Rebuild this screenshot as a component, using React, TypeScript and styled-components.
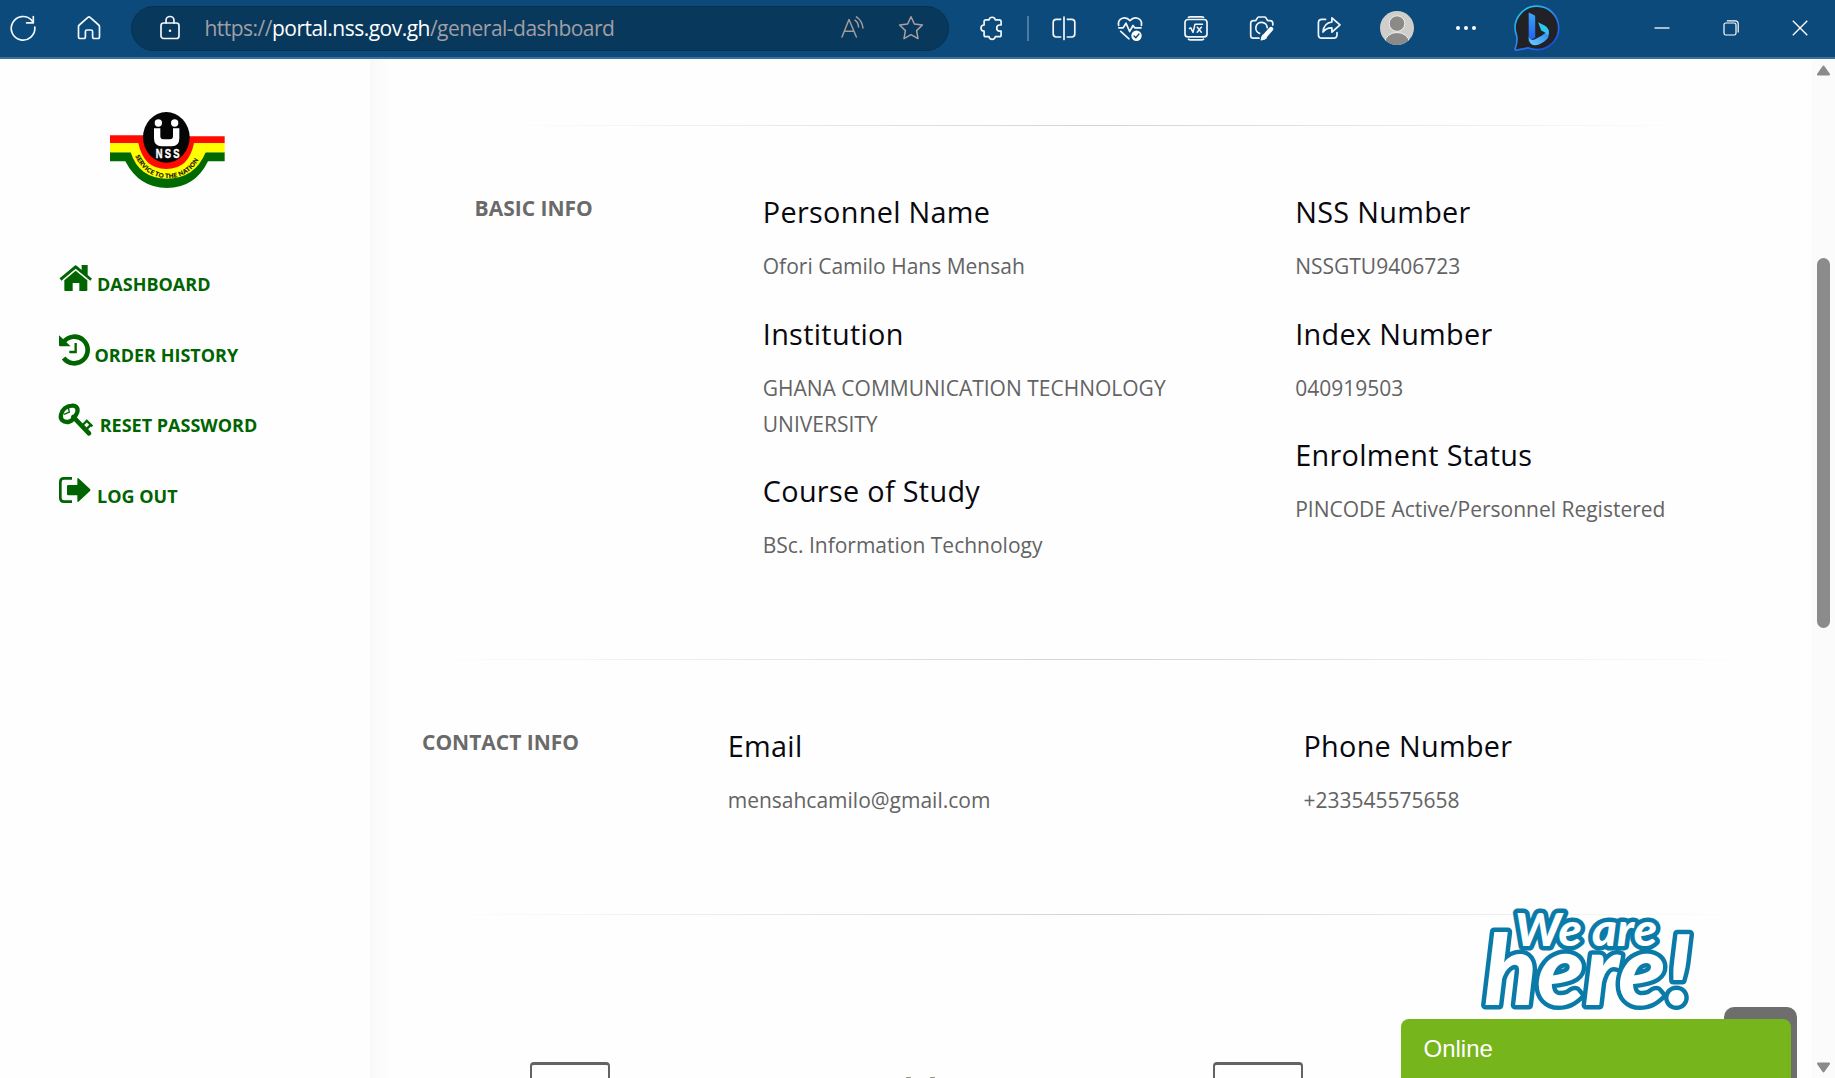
import React from "react";
import styled, { createGlobalStyle } from "styled-components";

const GlobalStyle = createGlobalStyle`
  * { box-sizing: border-box; }
  html, body { margin: 0; padding: 0; background: #fefefe; }
  body { font-family: "Open Sans", "Noto Sans", sans-serif; overflow: hidden; }
`;

const Window = styled.div`
  display: flex;
  flex-direction: column;
  width: 1835px;
  height: 1078px;
  overflow: hidden;
  position: relative;
`;

/* Browser bar */
const Toolbar = styled.header`
  display: flex;
  align-items: center;
  flex: none;
  height: 59px;
  background: #0b4a7a;
  border-bottom: 2px solid #3b719f;
`;

const Slot = styled.div<{ $gap: number; $w?: number; $h?: number }>`
  flex: none;
  display: flex;
  margin-left: ${(p) => p.$gap}px;
  margin-bottom: 1px;
  width: ${(p) => p.$w ?? 30}px;
  height: ${(p) => p.$h ?? 30}px;
  svg { display: block; width: 100%; height: 100%; overflow: visible; }
`;

const AddressBar = styled.div`
  flex: none;
  display: flex;
  align-items: center;
  margin-left: 27px;
  width: 818px;
  height: 45px;
  border-radius: 23px;
  background: #09385d;
  border: 1px solid #083252;
`;

const Url = styled.div`
  margin-left: 19.5px;
  margin-bottom: 2px;
  width: 612.5px;
  font-family: "Open Sans", "Noto Sans", sans-serif;
  font-size: 21px;
  line-height: 30px;
  letter-spacing: -0.52px;
  color: #a09fa3;
  white-space: nowrap;
`;

const Host = styled.span`
  color: #fff;
`;

const Separator = styled.div`
  flex: none;
  width: 2px;
  height: 25px;
  margin-left: 20px;
  background: #4a7ba3;
`;

const strokeProps = {
  fill: "none",
  stroke: "#f2f6fa",
  strokeWidth: 1.7,
  strokeLinecap: "round" as const,
  strokeLinejoin: "round" as const,
};

const ReloadIcon = () => (
  <svg viewBox="0 0 30 30" {...strokeProps}>
    <path d="M26.8 14.2A11.8 11.8 0 1 1 23.6 7.2L25.3 9.4" />
    <path d="M25.3 3.6V9.8H18.6" />
  </svg>
);
const HomeIcon = () => (
  <svg viewBox="0 0 30 30" {...strokeProps}>
    <path d="M13.9 4.4 5.3 12q-.8.7-.8 1.8V23.8q0 1.7 1.7 1.7H9.8q1.6 0 1.6-1.7V18.6q0-1.6 1.6-1.6H17q1.6 0 1.6 1.6V23.8q0 1.7 1.6 1.7H23.8q1.7 0 1.7-1.7V13.8q0-1.1-.8-1.8L16.1 4.4q-1.1-.9-2.2 0Z" />
  </svg>
);
const LockIcon = () => (
  <svg viewBox="0 0 30 30" {...strokeProps}>
    <rect x="6" y="10" width="18" height="15.5" rx="2.6" />
    <path d="M11 10V7.5a4 4 0 0 1 8 0V10" />
    <circle cx="15" cy="17.7" r="1.3" fill="#f2f6fa" stroke="none" />
  </svg>
);
const ReadAloudIcon = () => (
  <svg viewBox="0 0 30 30" {...strokeProps} stroke="#a39c9a" strokeWidth={1.5}>
    <path d="M4 24 11 6.5 18.4 24M6.4 18.3H16" />
    <path d="M17 7.2Q20.3 9.5 20.5 14M18.4 3.8Q24.2 7.6 25 15" />
  </svg>
);
const StarIcon = () => (
  <svg viewBox="0 0 30 30" {...strokeProps} stroke="#a8a19f" strokeWidth={1.5}>
    <path d="M15 3.8 18.4 11 26.4 12 20.6 17.6 22 25.6 15 21.7 8 25.6 9.4 17.6 3.6 12 11.6 11Z" />
  </svg>
);
const PuzzleIcon = () => (
  <svg viewBox="0 0 30 30" {...strokeProps}>
    <path d="M8.9 6.9H12A3.2 3.2 0 0 1 18.3 6.9H22.3Q24.1 6.9 24.1 8.7V12H22.8A3.1 3.1 0 0 0 22.8 18.2H24.1V21.9Q24.1 23.7 22.3 23.7H18.3A3.2 3.2 0 0 1 12 23.7H8.9Q7.1 23.7 7.1 21.9V18.2A3.1 3.1 0 0 1 7.1 12V8.7Q7.1 6.9 8.9 6.9Z" />
  </svg>
);
const SplitIcon = () => (
  <svg viewBox="0 0 30 30" {...strokeProps}>
    <path d="M11.6 6.3H7.3Q4.2 6.3 4.2 9.3V20.8Q4.2 24 7.3 24H11.6M18.4 6.3H22.7Q25.8 6.3 25.8 9.3V20.8Q25.8 24 22.7 24H18.4M15 4V26.5" />
  </svg>
);
const HeartIcon = () => (
  <svg viewBox="0 0 30 30" {...strokeProps}>
    <path d="M3.6 12.4C2.3 4.6 11 2.7 15 7.7 19 2.7 27.7 4.6 26.4 12.4" />
    <path d="M3.8 14.8H8.2L11 10.2 14.6 18.5 18 12.5 19.7 14.8H26" />
    <path d="M5.7 18.3 14 25.8" />
    <circle cx="21.5" cy="22.7" r="5.2" fill="#fff" stroke="none" />
    <path d="M19 23 20.8 24.7 24 21" stroke="#0b4a7a" strokeWidth={1.4} />
  </svg>
);
const MathIcon = () => (
  <svg viewBox="0 0 30 30" {...strokeProps}>
    <rect x="4" y="6.5" width="22" height="17.4" rx="3" />
    <path d="M7.5 4.3Q8.4 3.8 9.3 3.8H20.7Q21.6 3.8 22.5 4.3M7.5 26.2Q8.4 26.8 9.3 26.8H20.7Q21.6 26.8 22.5 26.2" />
    <path d="M8.4 15.5 9.8 14.8 12 19.3 14 11.2H21.5M16.3 14.2 20.3 19.2M20.3 14.2 16.2 19.2" strokeWidth={1.5} />
  </svg>
);
const CameraIcon = () => (
  <svg viewBox="0 0 30 30" {...strokeProps}>
    <path d="M12 25.2H6.4Q3.7 25.2 3.7 22.5V10.3Q3.7 7.6 6.4 7.6H8.8L10.6 4.6Q11 4 11.8 4H17.6Q18.3 4 18.8 4.6L20.6 7.6H23Q25.8 7.6 25.8 10.3V12" />
    <path d="M12.6 20.4A5.7 5.7 0 1 1 20.2 14.6" />
    <path d="M16.6 24.5 24 16" stroke="#fff" strokeWidth={4.4} />
    <path d="M14.4 26.7 16 22.4 19 25Z" fill="#fff" />
  </svg>
);
const ShareIcon = () => (
  <svg viewBox="0 0 30 30" {...strokeProps}>
    <path d="M11.5 6.4H8Q4.4 6.4 4.4 10V21.5Q4.4 25.2 8 25.2H19.4Q23 25.2 23 21.5V19.6" />
    <path d="M17.9 4.8 26 11.9 17.9 19.1V14.9Q12.2 14.6 9 19.1 9.6 9.9 17.9 9Z" />
  </svg>
);
const AvatarIcon = () => (
  <svg viewBox="0 0 34 34">
    <defs>
      <clipPath id="avatarClip"><circle cx="17" cy="17" r="17" /></clipPath>
    </defs>
    <circle cx="17" cy="17" r="17" fill="#d0cecb" />
    <g clipPath="url(#avatarClip)" fill="#8c8a88" stroke="#f0efee" strokeWidth="1">
      <circle cx="17" cy="12.6" r="7.8" />
      <ellipse cx="17" cy="31.5" rx="12.2" ry="10" />
    </g>
  </svg>
);
const MoreIcon = () => (
  <svg viewBox="0 0 30 30" fill="#fff">
    <circle cx="7" cy="15" r="2" /><circle cx="15" cy="15" r="2" /><circle cx="23" cy="15" r="2" />
  </svg>
);
const BingIcon = () => (
  <svg viewBox="0 0 50 50">
    <defs>
      <linearGradient id="ring" x1="0" y1="0" x2="0.7" y2="1">
        <stop offset="0" stopColor="#1fd3f3" />
        <stop offset="0.5" stopColor="#2f8bee" />
        <stop offset="1" stopColor="#1650e8" />
      </linearGradient>
      <linearGradient id="stem" x1="0" y1="0" x2="0" y2="1">
        <stop offset="0" stopColor="#3ea4f5" />
        <stop offset="1" stopColor="#1c5ff0" />
      </linearGradient>
      <linearGradient id="bowl" x1="1" y1="0" x2="0" y2="1">
        <stop offset="0" stopColor="#2b7df2" />
        <stop offset="1" stopColor="#6bd3fb" />
      </linearGradient>
    </defs>
    <path d="M25 3.2A21.6 21.6 0 1 1 25 46.6Q20 46.6 16 44.9L4.5 47.2Q2.6 47.4 3.2 45.6C5.2 40.4 5.4 36.6 4.6 32.6A21.6 21.6 0 0 1 25 3.2Z" fill="#222226" stroke="url(#ring)" strokeWidth="1.7" />
    <path d="M16.7 9.6 22 12Q23.2 12.7 23.2 14V34.5L16.7 38.4Z" fill="url(#stem)" />
    <path d="M16.7 33.5Q17.8 38 22.5 36.6L30 32.6Q35 29.3 36.6 26.2 38.6 34.6 32 38.8L27 41.6Q22 43.4 18.8 40.8 16.7 39 16.7 35Z" fill="url(#bowl)" />
    <path d="M26 19.2 32.6 22.6Q37.5 25.4 36.6 30.5 35.6 33.2 34.8 31.4 33.8 29.6 31.2 28.5L29.4 27.7Z" fill="#2cc8ee" />
  </svg>
);
const MinimizeIcon = () => (
  <svg viewBox="0 0 30 30" stroke="#fff" strokeWidth="1.3"><path d="M7.5 15H22.5" /></svg>
);
const RestoreIcon = () => (
  <svg viewBox="0 0 30 30" fill="none" stroke="#fff" strokeWidth="1.2">
    <rect x="8" y="10" width="12" height="12" rx="1.8" />
    <path d="M10.8 7.8H19.2Q22.2 7.8 22.2 10.8V19.4" />
  </svg>
);
const CloseIcon = () => (
  <svg viewBox="0 0 30 30" stroke="#fff" strokeWidth="1.3"><path d="M7.8 7.8 22.3 22.3M22.3 7.8 7.8 22.3" /></svg>
);

/* Page */
const Page = styled.div`
  display: flex;
  flex: 1;
  min-height: 0;
`;

const Sidebar = styled.aside`
  flex: none;
  width: 370px;
  background: #fefefe;
  padding: 36px 0 0 58px;
`;

const LogoBox = styled.div`
  width: 160px;
  height: 110px;
  margin-left: 31px;
  svg { display: block; }
`;

const Nav = styled.nav`
  display: flex;
  flex-direction: column;
  gap: 34.7px;
  margin-top: 55px;
`;

const NavItem = styled.a<{ $gap: number }>`
  display: flex;
  height: 36px;
  gap: ${(p) => p.$gap}px;
  color: #006400;
  text-decoration: none;
  svg { display: block; flex: none; overflow: visible; }
`;

const NavText = styled.span`
  font-weight: 700;
  font-size: 18px;
  line-height: 26px;
  margin-top: 11px;
  white-space: nowrap;
`;

const Main = styled.main`
  flex: 1;
  min-width: 0;
  background: linear-gradient(to right, #f8f8f8 0, #fefefe 20px);
  padding-top: 66px;
`;

const Divider = styled.hr<{ $left: number; $width: number }>`
  border: 0;
  height: 1px;
  margin: 0 0 0 ${(p) => p.$left}px;
  width: ${(p) => p.$width}px;
  background: linear-gradient(to right, rgba(0, 0, 0, 0), rgba(0, 0, 0, 0.17), rgba(0, 0, 0, 0));
`;

const Section = styled.section<{ $left: number; $label: number; $first: number; $height: number }>`
  display: grid;
  grid-template-columns: ${(p) => p.$label}px ${(p) => p.$first}px 1fr;
  height: ${(p) => p.$height}px;
  padding: 64px 0 0 ${(p) => p.$left}px;
`;

const SectionLabel = styled.h2`
  margin: 0;
  font-size: 21px;
  font-weight: 700;
  line-height: 36px;
  color: #6a6a6a;
  white-space: nowrap;
`;

const Fields = styled.div`
  display: flex;
  flex-direction: column;
  gap: 32.8px;
  padding-top: 4.8px;
`;

const FieldTitle = styled.h3`
  margin: 0 0 19px;
  font-size: 28.8px;
  font-weight: 400;
  line-height: 34px;
  letter-spacing: 0.32px;
  color: #08080f;
  white-space: nowrap;
`;

const FieldValue = styled.p`
  margin: 0;
  max-width: 430px;
  font-size: 21px;
  line-height: 36px;
  color: #636363;
`;

const Tiles = styled.div`
  display: flex;
  align-items: flex-start;
  margin: 147px 0 0 160px;
`;

const Tile = styled.div<{ $gap: number; $w: number }>`
  width: ${(p) => p.$w}px;
  height: 60px;
  margin-left: ${(p) => p.$gap}px;
  border: 2px solid #626366;
  border-top-width: 3px;
  border-radius: 4px 4px 0 0;
`;

const Speck = styled.div<{ $gap: number }>`
  width: 5px;
  height: 2px;
  margin: 15px 0 0 ${(p) => p.$gap}px;
  background: #97978c;
`;

const Scrollbar = styled.div`
  flex: none;
  display: flex;
  flex-direction: column;
  align-items: center;
  width: 23px;
  background: #fbfbfb;
  padding: 6px 0 5px;
  svg { display: block; }
`;

const Thumb = styled.div`
  width: 13px;
  height: 370px;
  margin: 182px 0 434px;
  border-radius: 7px;
  background: #8b8b8b;
`;

/* Chat widget, floating above the page */
const BackToTop = styled.div`
  position: absolute;
  left: 1724px;
  top: 1007px;
  width: 73px;
  height: 80px;
  border-radius: 10px;
  background: #6e6e6e;
`;

const ChatBar = styled.div`
  position: absolute;
  left: 1401px;
  top: 1019px;
  width: 390px;
  height: 70px;
  padding: 16px 22.5px;
  border-radius: 8px;
  background: #76b51b;
  color: #fff;
  font-family: "Liberation Sans", Arial, sans-serif;
  font-size: 24px;
  line-height: 28px;
`;

const Greeting = styled.svg`
  position: absolute;
  left: 1475px;
  top: 900px;
  width: 226px;
  height: 116px;
  overflow: visible;
  font-family: Lato, sans-serif;
  font-weight: 900;
  font-style: italic;
  text {
    fill: #fff;
    stroke: #0a7ba8;
    stroke-width: 9px;
    stroke-linejoin: round;
    paint-order: stroke;
  }
`;

const HouseGlyph = () => (
  <svg width="34" height="36" viewBox="84 60 102 108" fill="currentColor">
    <path d="M89 115 133 78Q137 74 141 78L155 90V75H173V105L186 116 181 122 137 86 94 122Z" />
    <path d="M137 92 172 121V150Q172 153 169 153H148V129H128V153H106Q103 153 103 150V121Z" />
  </svg>
);
const HistoryGlyph = () => (
  <svg width="34" height="36" viewBox="84 272 102 108" fill="none" stroke="currentColor">
    <path d="M101 353A40 40 0 1 0 101 305" strokeWidth="14" />
    <path d="M87 285 122 318H91Q87 318 87 314Z" fill="currentColor" stroke="none" />
    <path d="M137 308V335H118" strokeWidth="7" />
  </svg>
);
const KeyGlyph = () => (
  <svg width="34" height="36" viewBox="84 484 102 108" fill="none" stroke="currentColor">
    <path d="M125 498C137 496 145 504 142 517 140 524 137 528 132 534 128 541 122 546 114 547 99 548 90 540 93 525 97 509 110 499 125 498Z" strokeWidth="13" />
    <path d="M115 503 118 517 102 524" strokeWidth="4" />
    <path d="M130 532 177 581" strokeWidth="14" strokeLinecap="round" />
    <path d="M158 556 170 544M171 567 183 555M168 541 187 560" strokeWidth="7" />
  </svg>
);
const LogoutGlyph = () => (
  <svg width="34" height="36" viewBox="84 696 102 108" fill="none" stroke="currentColor">
    <path d="M126 715H102Q91 715 91 726V774Q91 785 102 785H126" strokeWidth="8" />
    <path d="M111 739Q111 735 115 735H142V718Q142 711 147 716L180 747Q183 750 180 753L147 784Q142 789 142 782V766H115Q111 766 111 762Z" fill="currentColor" stroke="none" />
  </svg>
);

const NssLogo = () => (
  <svg width="160" height="110" viewBox="0 0 480 330">
    <defs>
      <path id="motto" d="M137 178A105 105 0 0 0 336 178" />
    </defs>
    <path d="M63 172H125Q172 226 234 226T350 172H407V199H357Q318 279 234 279T109 199H63Z" fill="#006a00" />
    <path d="M63 144H407V172H350Q318 251 234 251T125 172H63Z" fill="#ffff00" />
    <path d="M63 121H163L234 110 303 124H407V144H315Q300 222 232 222T148 144H63Z" fill="#ff0a00" />
    <ellipse cx="232" cy="127" rx="70" ry="76" fill="#050505" />
    <circle cx="208" cy="84" r="11" fill="#fff" />
    <circle cx="257" cy="84" r="11" fill="#fff" />
    <path d="M195 100H214V124Q214 133 223 133H243Q252 133 252 124V100H271V130Q271 154 248 154H218Q195 154 195 130Z" fill="#fff" />
    <g transform="translate(200 189) scale(0.78 1)">
      <text x="0" y="0" fill="#fff" stroke="#fff" strokeWidth="1.4" fontFamily="Liberation Sans, Arial, sans-serif" fontWeight="700" fontSize="36" letterSpacing="9">NSS</text>
    </g>
    <text fill="#111" stroke="#111" strokeWidth="0.5" fontFamily="Lato, sans-serif" fontWeight="900" fontSize="18.5">
      <textPath href="#motto" startOffset="5" textLength="238" lengthAdjust="spacing">SERVICE TO THE NATION</textPath>
    </text>
  </svg>
);

const navItems = [
  { label: "DASHBOARD", gap: 5, Glyph: HouseGlyph },
  { label: "ORDER HISTORY", gap: 2.5, Glyph: HistoryGlyph },
  { label: "RESET PASSWORD", gap: 7.7, Glyph: KeyGlyph },
  { label: "LOG OUT", gap: 5, Glyph: LogoutGlyph },
];

const Field = ({ title, children }: { title: string; children: React.ReactNode }) => (
  <div>
    <FieldTitle>{title}</FieldTitle>
    <FieldValue>{children}</FieldValue>
  </div>
);

export default function App() {
  return (
    <Window>
      <GlobalStyle />
      <Toolbar>
        <Slot $gap={8}><ReloadIcon /></Slot>
        <Slot $gap={36}><HomeIcon /></Slot>
        <AddressBar>
          <Slot $gap={23}><LockIcon /></Slot>
          <Url>https://<Host>portal.nss.gov.gh</Host>/general-dashboard</Url>
          <Slot $gap={20.5}><ReadAloudIcon /></Slot>
          <Slot $gap={28.5}><StarIcon /></Slot>
        </AddressBar>
        <Slot $gap={28}><PuzzleIcon /></Slot>
        <Separator />
        <Slot $gap={20}><SplitIcon /></Slot>
        <Slot $gap={36}><HeartIcon /></Slot>
        <Slot $gap={36}><MathIcon /></Slot>
        <Slot $gap={36}><CameraIcon /></Slot>
        <Slot $gap={36.5}><ShareIcon /></Slot>
        <Slot $gap={36.5} $w={34} $h={34}><AvatarIcon /></Slot>
        <Slot $gap={37}><MoreIcon /></Slot>
        <Slot $gap={31} $w={50} $h={50}><BingIcon /></Slot>
        <Slot $gap={85}><MinimizeIcon /></Slot>
        <Slot $gap={39}><RestoreIcon /></Slot>
        <Slot $gap={39}><CloseIcon /></Slot>
      </Toolbar>
      <Page>
        <Sidebar>
          <LogoBox><NssLogo /></LogoBox>
          <Nav>
            {navItems.map(({ label, gap, Glyph }) => (
              <NavItem key={label} $gap={gap}>
                <Glyph />
                <NavText>{label}</NavText>
              </NavItem>
            ))}
          </Nav>
        </Sidebar>
        <Main>
          <Divider $left={126} $width={1198} />
          <Section $left={104.6} $label={288.2} $first={532.4} $height={533}>
            <SectionLabel>BASIC INFO</SectionLabel>
            <Fields>
              <Field title="Personnel Name">Ofori Camilo Hans Mensah</Field>
              <Field title="Institution">GHANA COMMUNICATION TECHNOLOGY UNIVERSITY</Field>
              <Field title="Course of Study">BSc. Information Technology</Field>
            </Fields>
            <Fields>
              <Field title="NSS Number">NSSGTU9406723</Field>
              <Field title="Index Number">040919503</Field>
              <Field title="Enrolment Status">PINCODE Active/Personnel Registered</Field>
            </Fields>
          </Section>
          <Divider $left={52} $width={1340} />
          <Section $left={52} $label={305.7} $first={575.7} $height={254}>
            <SectionLabel>CONTACT INFO</SectionLabel>
            <Fields>
              <Field title="Email">mensahcamilo@gmail.com</Field>
            </Fields>
            <Fields>
              <Field title="Phone Number">+233545575658</Field>
            </Fields>
          </Section>
          <Divider $left={68} $width={1314} />
          <Tiles>
            <Tile $gap={0} $w={80} />
            <Speck $gap={296} />
            <Speck $gap={19} />
            <Tile $gap={278} $w={90} />
          </Tiles>
        </Main>
        <Scrollbar>
          <svg width="15" height="11" viewBox="0 0 15 11"><path d="M7.5 1.6 13 9.4H2Z" fill="#8b8b8b" stroke="#8b8b8b" strokeWidth="2" strokeLinejoin="round" /></svg>
          <Thumb />
          <svg width="15" height="11" viewBox="0 0 15 11"><path d="M7.5 9.4 13 1.6H2Z" fill="#8b8b8b" stroke="#8b8b8b" strokeWidth="2" strokeLinejoin="round" /></svg>
        </Scrollbar>
      </Page>
      <BackToTop />
      <ChatBar>Online</ChatBar>
      <Greeting viewBox="0 0 226 116">
        <text x="9" y="105" fontSize="97" textLength="208" lengthAdjust="spacingAndGlyphs">here!</text>
        <text x="40" y="45.5" fontSize="46" textLength="142" lengthAdjust="spacingAndGlyphs">We are</text>
      </Greeting>
    </Window>
  );
}
